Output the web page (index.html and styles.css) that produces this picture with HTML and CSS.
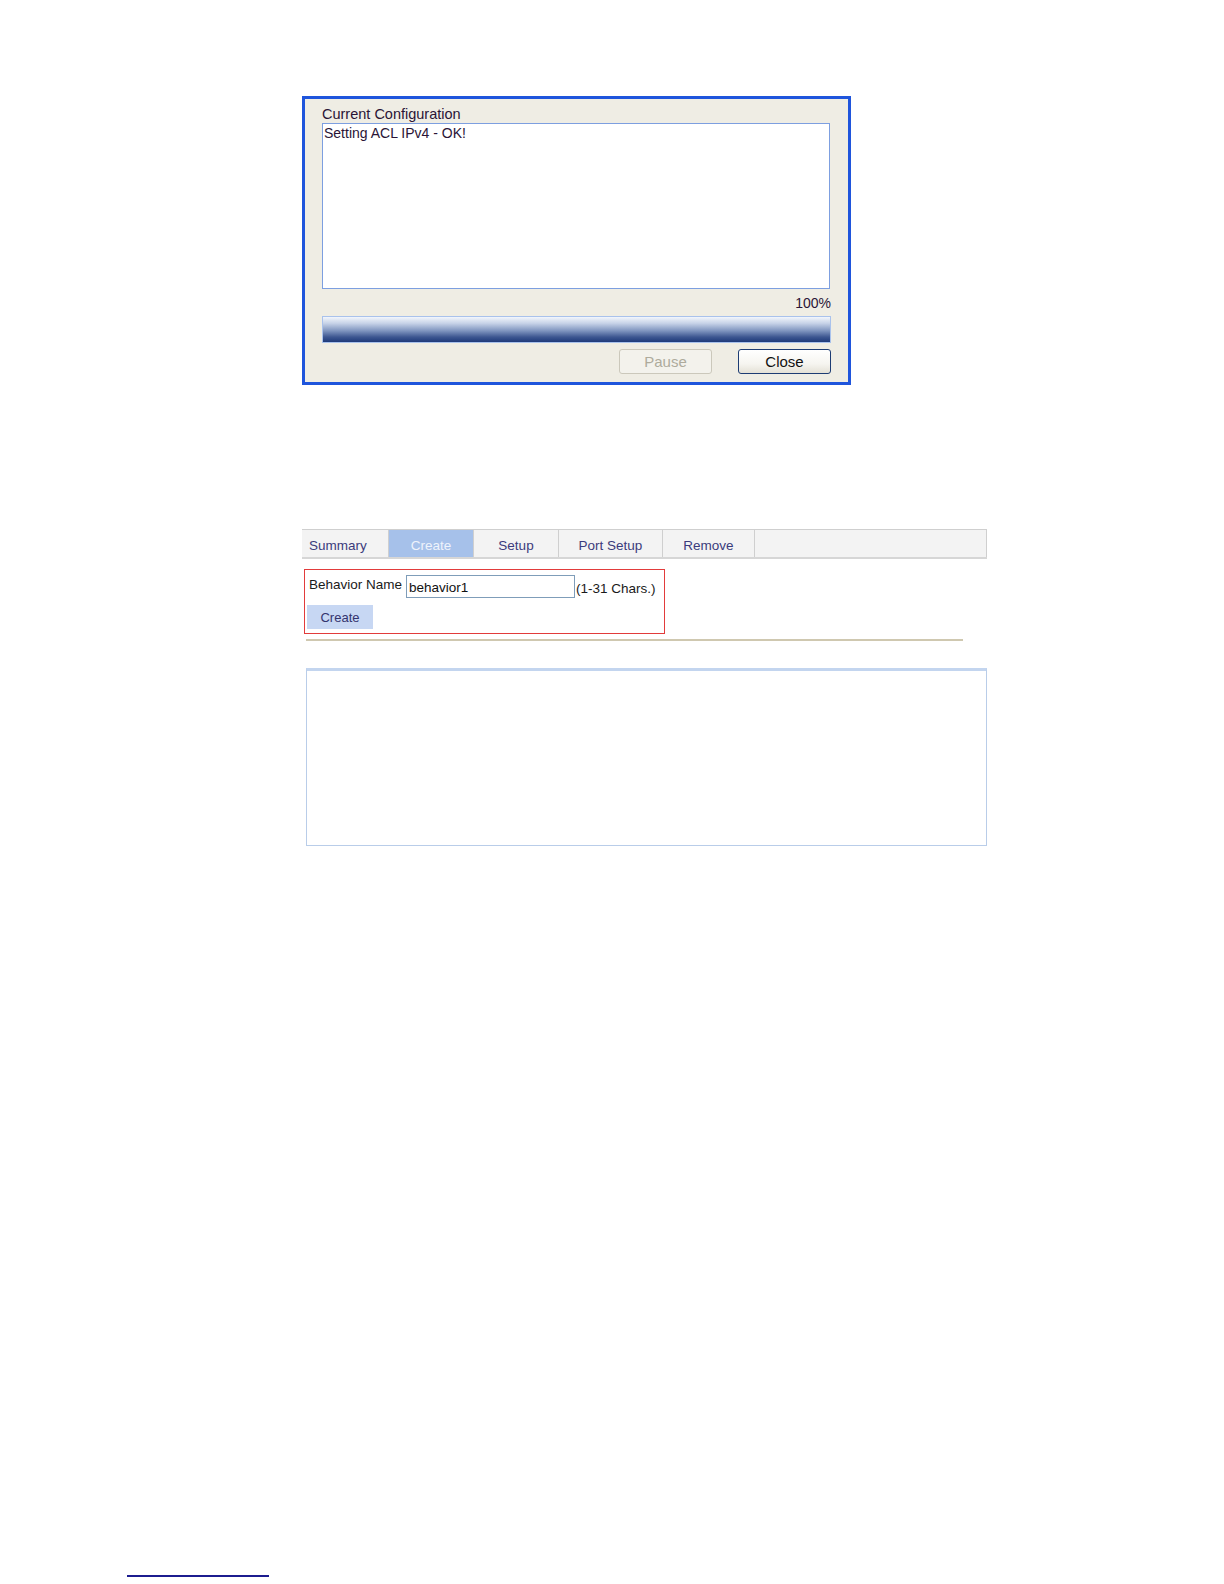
FILE: index.html
```html
<!DOCTYPE html>
<html>
<head>
<meta charset="utf-8">
<link rel="stylesheet" href="styles.css">
</head>
<body>
<div class="page">
  <div class="dialog">
    <div class="dlg-label">Current Configuration</div>
    <div class="dlg-log">Setting ACL IPv4 - OK!</div>
    <div class="dlg-pct">100%</div>
    <div class="dlg-progress"></div>
    <div class="dlg-buttons">
      <button class="xp-btn disabled" disabled>Pause</button>
      <button class="xp-btn">Close</button>
    </div>
  </div>

  <div class="panel">
    <div class="tabs">
      <div class="tab tab-first">Summary</div>
      <div class="tab tab-active">Create</div>
      <div class="tab">Setup</div>
      <div class="tab tab-wide">Port Setup</div>
      <div class="tab tab-remove">Remove</div>
      <div class="tab-rest"></div>
    </div>
    <div class="form-box">
      <div class="form-row">
        <span class="form-label">Behavior Name</span>
        <input class="form-input" type="text" value="behavior1">
        <span class="form-hint">(1-31 Chars.)</span>
      </div>
      <button class="web-btn">Create</button>
    </div>
    <div class="divider"></div>
    <div class="result-box"></div>
  </div>

  <div class="footnote-rule"></div>
</div>
</body>
</html>
```

FILE: styles.css
```css
html, body {
  margin: 0;
  padding: 0;
  background: #ffffff;
}

body {
  font-family: "Liberation Sans", Arial, sans-serif;
  width: 1224px;
  height: 1584px;
  overflow: hidden;
}

.page {
  display: flex;
  flex-direction: column;
  padding-top: 96px;
}

/* ---------- dialog ---------- */
.dialog {
  margin-left: 302px;
  width: 543px;
  border: 3px solid #1f55dc;
  background: #efede4;
  padding: 0 0 8px 0;
  display: flex;
  flex-direction: column;
  box-sizing: content-box;
}

.dlg-label {
  margin: 7px 0 0 17px;
  font-size: 14.5px;
  line-height: 16px;
  color: #2a1436;
  height: 16px;
}

.dlg-log {
  margin: 1px 0 0 17px;
  width: 504px;
  height: 162px;
  border: 1px solid #7d9fe0;
  background: #ffffff;
  font-size: 14px;
  line-height: 16px;
  color: #2a1436;
  padding: 1px 1px;
  box-sizing: content-box;
}

.dlg-pct {
  margin: 6px 17px 0 0;
  align-self: flex-end;
  font-size: 14px;
  line-height: 16px;
  color: #2a1436;
}

.dlg-progress {
  margin: 5px 0 0 17px;
  width: 507px;
  height: 25px;
  border: 1px solid #a9c2ec;
  background: linear-gradient(to bottom, #f2f6fc 0%, #c7d3e8 25%, #7f95bf 55%, #3d5791 80%, #1e3a7a 100%);
}

.dlg-buttons {
  display: flex;
  justify-content: flex-end;
  gap: 26px;
  margin: 6px 17px 0 0;
}

.xp-btn {
  width: 93px;
  height: 25px;
  border: 1px solid #1d3c73;
  border-radius: 3px;
  background: linear-gradient(to bottom, #ffffff 0%, #f6f5f0 60%, #e4e1d6 100%);
  font-family: "Liberation Sans", Arial, sans-serif;
  font-size: 15px;
  color: #111111;
  padding: 0;
}

.xp-btn.disabled {
  border-color: #cbc8bb;
  background: #f3f2ec;
  color: #aeab9c;
}

/* ---------- web panel ---------- */
.panel {
  margin: 144px 0 0 302px;
  width: 685px;
  display: flex;
  flex-direction: column;
}

.tabs {
  display: flex;
  height: 27px;
  border-top: 1px solid #cfcfcf;
  border-bottom: 2px solid #d6d6d6;
  background: #f3f3f3;
}

.tab {
  width: 84px;
  border-right: 1px solid #cfcfcf;
  font-size: 13.5px;
  line-height: 16px;
  padding-top: 8px;
  color: #3b3b7c;
  text-align: center;
}

.tab-first {
  text-align: left;
  padding-left: 7px;
  box-sizing: border-box;
  width: 87px;
}

.tab-active {
  background: #a6c1ea;
  color: #eef3fc;
}

.tab-wide {
  width: 103px;
}

.tab-remove {
  width: 91px;
}

.tab-rest {
  flex: 1;
  border-right: 1px solid #cfcfcf;
}

.form-box {
  margin: 10px 0 0 2px;
  width: 357px;
  height: 63px;
  border: 1px solid #e23b3b;
  display: flex;
  flex-direction: column;
  padding: 0 0 0 2px;
}

.form-row {
  display: flex;
  align-items: flex-end;
  margin-top: 5px;
  height: 23px;
}

.form-label {
  font-size: 13.5px;
  line-height: 16px;
  color: #1a1a1a;
  margin: 0 4px 0 2px;
  align-self: center;
  position: relative;
  top: -2px;
}

.form-input {
  width: 169px;
  height: 23px;
  box-sizing: border-box;
  border: 1px solid #7f9db9;
  font-family: "Liberation Sans", Arial, sans-serif;
  font-size: 13.5px;
  color: #111111;
  padding: 1px 2px 0;
  margin: 0;
}

.form-hint {
  font-size: 13.5px;
  line-height: 16px;
  color: #1a1a1a;
  margin: 0 0 1px 1px;
}

.web-btn {
  margin-top: 7px;
  width: 66px;
  height: 24px;
  border: none;
  background: #c7d7f3;
  font-family: "Liberation Sans", Arial, sans-serif;
  font-size: 13px;
  color: #34346e;
  padding: 0;
}

.divider {
  margin: 5px 0 0 4px;
  width: 657px;
  height: 2px;
  background: #cfc8b0;
}

.result-box {
  margin: 27px 0 0 4px;
  width: 679px;
  height: 174px;
  border: 1px solid #b9cde9;
  border-top: 3px solid #c3d5ef;
}

.footnote-rule {
  margin: 729px 0 0 127px;
  width: 142px;
  height: 2px;
  background: #1c1c8f;
}
```
